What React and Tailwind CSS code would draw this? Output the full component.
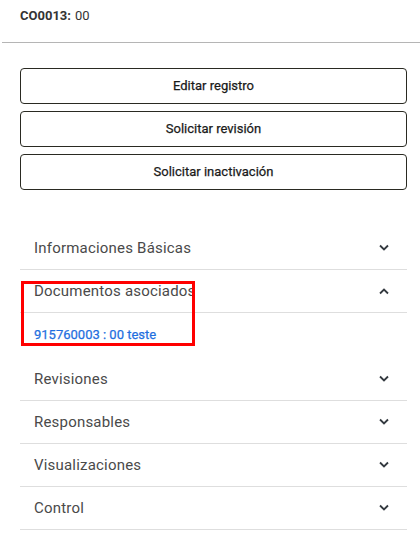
import React from "react";

const Chevron = ({ up }) => (
  <svg width="12" height="8" viewBox="0 0 12 8" className="shrink-0">
    <path
      d={up ? "M2 6.5 L6 2.5 L10 6.5" : "M2 1.5 L6 5.5 L10 1.5"}
      fill="none"
      stroke="#343a40"
      strokeWidth="1.8"
    />
  </svg>
);

const Item = ({ title, open, children }) => (
  <div>
    <div className="flex h-[43px] items-center justify-between border-b border-[#dedede] pl-[14px] pr-[17px]">
      <span className="text-[15px] tracking-[0.2px] text-[#4a4a4a]">{title}</span>
      <Chevron up={open} />
    </div>
    {open && children}
  </div>
);

export default function App() {
  return (
    <div className="relative h-[545px] w-[420px] bg-white" style={{ fontFamily: "Roboto, 'Liberation Sans', sans-serif" }}>
      <div className="flex h-[42px] items-start px-5 pt-[6px] text-[13px] text-[#333]">
        <span className="font-bold">CO0013:</span>
        <span className="ml-1">00</span>
      </div>
      <div className="ml-[2px] border-t border-[#b5b5b5]" />
      <div className="flex flex-col gap-[7px] px-5 pt-[25px]">
        {["Editar registro", "Solicitar revisión", "Solicitar inactivación"].map((t) => (
          <button
            key={t}
            className="flex h-[36px] w-[387px] items-center justify-center rounded-[4px] border border-[#2a2a22] text-[13px] font-normal text-[#1a1a1a] [-webkit-text-stroke:0.25px_#1a1a1a]"
          >
            {t}
          </button>
        ))}
      </div>
      <div className="ml-5 mt-[37px] w-[387px]">
        <Item title="Informaciones Básicas" />
        <Item title="Documentos asociados" open>
          <div className="flex h-[45px] items-center pl-[14px] pb-[2px]">
            <span className="text-[13px] font-normal text-[#1f6fe0] [-webkit-text-stroke:0.25px_#1f6fe0]">915760003 : 00 teste</span>
          </div>
        </Item>
        <Item title="Revisiones" />
        <Item title="Responsables" />
        <Item title="Visualizaciones" />
        <Item title="Control" />
      </div>
      <div className="pointer-events-none absolute left-[21px] top-[281px] h-[65px] w-[174px] border-[3px] border-[#ff0000]" />
    </div>
  );
}
